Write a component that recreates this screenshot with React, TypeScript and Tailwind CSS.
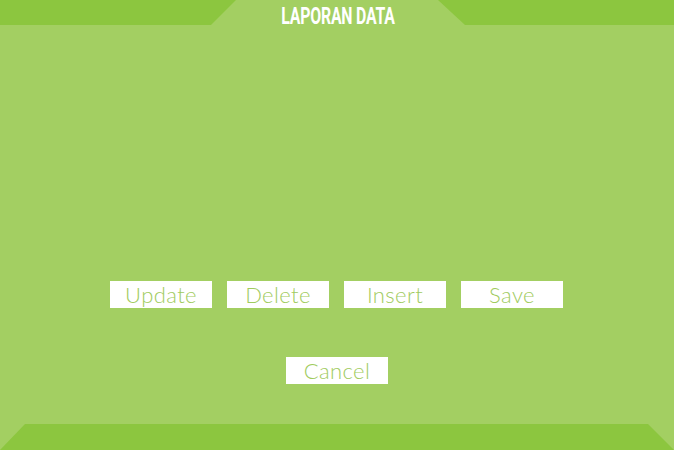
import React from 'react';

const buttons = ['Update', 'Delete', 'Insert', 'Save'];

const ActionButton: React.FC<{ label: string }> = ({ label }) => (
  <button className="w-[102px] h-[27px] bg-white flex items-center justify-center text-[22px] leading-none font-light text-[#9fcb5e] font-['Lato','Open_Sans',sans-serif] tracking-[0.4px]">
    {label}
  </button>
);

export default function App() {
  return (
    <div className="w-[674px] h-[450px] bg-[#a3cf62] flex flex-col overflow-hidden">
      <header className="h-[25px] bg-[#8cc63f] flex justify-center shrink-0">
        <div className="ml-[2px] w-[254px] h-full bg-[#a3cf62] [clip-path:polygon(25px_0,calc(100%-27px)_0,100%_100%,0_100%)] flex items-start justify-center pt-[4px]">
          <h1 className="text-white text-[24px] leading-none font-bold uppercase font-['Roboto',sans-serif] scale-x-[0.66] tracking-[-0.3px] whitespace-nowrap">
            Laporan Data
          </h1>
        </div>
      </header>

      <main className="flex-1 flex flex-col items-center">
        <div className="mt-[256px] flex gap-[15px] ml-[-1px]">
          {buttons.map((b) => (
            <ActionButton key={b} label={b} />
          ))}
        </div>
        <div className="mt-[49px]">
          <ActionButton label="Cancel" />
        </div>
      </main>

      <footer className="h-[26px] shrink-0">
        <div className="h-full bg-[#8cc63f] [clip-path:polygon(25px_0,calc(100%-26px)_0,100%_100%,0_100%)]" />
      </footer>
    </div>
  );
}
